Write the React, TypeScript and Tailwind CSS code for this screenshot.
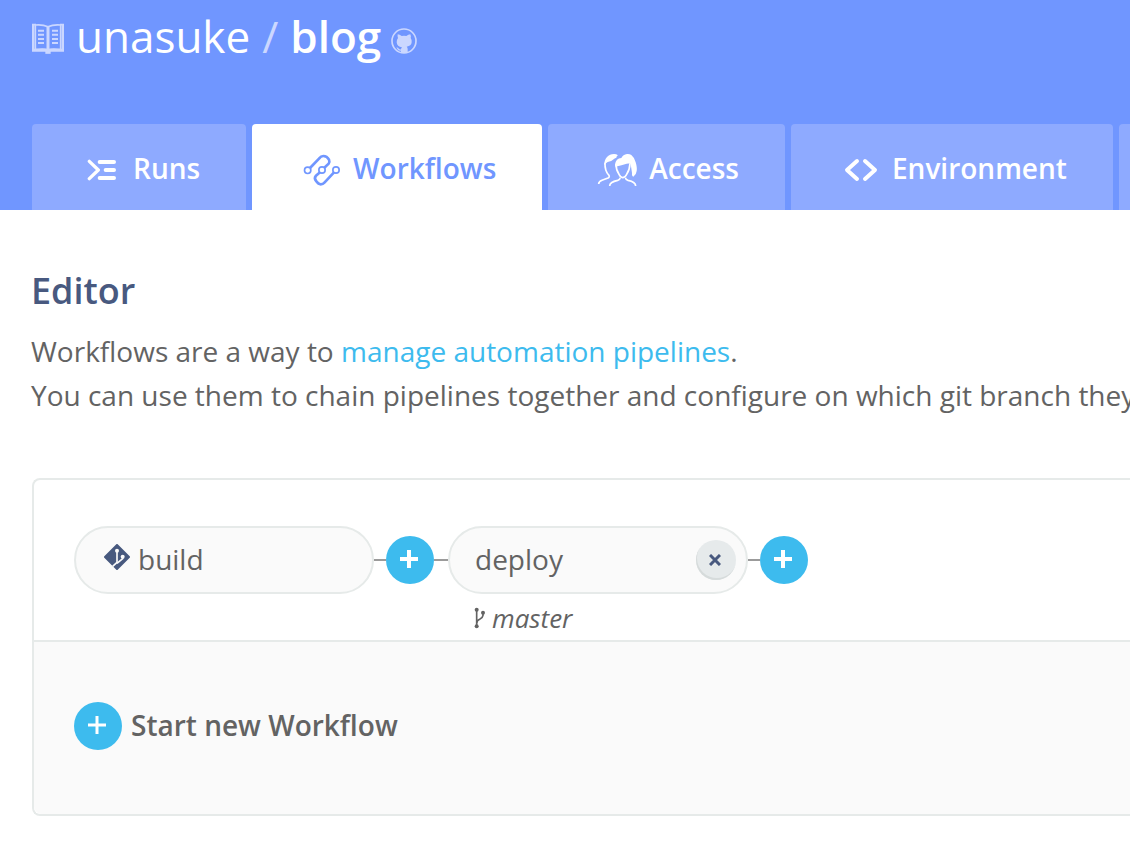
import type { ReactNode } from "react";

function BookIcon() {
  return (
    <svg viewBox="36 39 96 93" className="h-[31px] w-8 flex-none" fill="none" stroke="#cbd7ff" aria-hidden="true">
      <path d="M39.500 44v78M128.500 44v78" strokeWidth="7" />
      <path d="M36 121h39q9 0 9 5.500q0-5.500 9-5.500h39" strokeWidth="9" />
      <path d="M76 128h16" strokeWidth="7" />
      <path d="M46 118V45q22-2 38 5v69q-15-4-38 0ZM84 50q16-7 38-5v74q-23-4-38 0" strokeWidth="5" />
      <path d="M36 44h12M120 44h12" strokeWidth="5" />
      <path d="M84 48v74" strokeWidth="9" />
      <path d="M54 62h18M54 74h18M54 87h18M54 99h18M96 62h18M96 74h18M96 87h18M96 99h18" strokeWidth="6" />
    </svg>
  );
}

function OctocatIcon() {
  return (
    <svg viewBox="419 53 78 78" className="size-[26px]" aria-hidden="true">
      <circle cx="458" cy="92" r="36" fill="none" stroke="#cbd7ff" strokeWidth="5" />
      <path
        fill="#cbd7ff"
        d="M439 72q6 0 12 5q7-1 14 0q6-5 12-5q3 6 1 11q4 5 3 13q-1 11-15 13q3 3 3 7v12h-20v-7q-8 1-11-5q-1-3-3-4q5-1 8 4q3 2 6 1q1-4 3-6q-15-2-16-15q0-8 4-13q-2-5-1-11Z"
      />
    </svg>
  );
}

function RunsIcon() {
  return (
    <svg viewBox="201 129 90 72" className="h-6 w-[30px]" fill="none" stroke="currentColor" strokeLinecap="round" strokeLinejoin="round" aria-hidden="true">
      <path d="M208 139l27 26l-27 26" strokeWidth="10" />
      <path d="M239 141h43M257 165h25M239 189h43" strokeWidth="12" />
    </svg>
  );
}

function WorkflowsIcon() {
  return (
    <svg viewBox="174 112 114 102" className="h-[34px] w-[38px]" fill="none" stroke="currentColor" aria-hidden="true">
      <g strokeWidth="8">
        <path d="M195 157l27-28q6-8 13-8q11 0 17 11q3 7-1 12l-13 12" />
        <path d="M225 170l-12 10q-7 8 1 17q6 9 13 9q7 0 12-6l28-30" />
      </g>
      <g strokeWidth="5">
        <circle cx="188" cy="164" r="9.500" />
        <circle cx="231" cy="163" r="9.500" />
        <circle cx="273" cy="163" r="9.500" />
      </g>
    </svg>
  );
}

function AccessIcon() {
  return (
    <svg viewBox="201 114 126 102" className="h-[34px] w-[42px]" fill="none" stroke="currentColor" strokeWidth="5" aria-hidden="true">
      <path d="M225 143q-1 25 12 38q3 6-5 9l-16 6q-10 4-10 11" />
      <path d="M258 147q0 18 9 31q11 20 23 0q9-13 10-32" />
      <path d="M271 188q-1 6-8 8q-24 5-24 17M286 188q1 6 8 8q23 5 23 17" />
      <path
        fill="currentColor"
        stroke="none"
        d="M223 151q-1-15 8-25q8-9 21-9q7 0 12 4q-4 1-5 7q-6 2-8 5q-6 7-18 8q-5 3-10 10Z"
      />
      <path
        fill="currentColor"
        stroke="none"
        d="M256 155q-3-11 5-21q5-5 13-5q5-10 17-12q7-1 13 3q9 7 13 22q5 17 3 26q-1 11-10 17q-5-1-4-11l-4-27q-5-3-12-1q-14 5-34 9Z"
      />
    </svg>
  );
}

function EnvironmentIcon() {
  return (
    <svg viewBox="192 129 108 78" className="h-[26px] w-9" fill="none" stroke="currentColor" strokeWidth="12" strokeLinecap="round" strokeLinejoin="round" aria-hidden="true">
      <path d="M234 141l-30 27l30 27M258 141l30 27l-30 27" />
    </svg>
  );
}

function GitIcon() {
  return (
    <svg viewBox="132 87 78 78" className="mb-1 size-[26px] flex-none" aria-hidden="true">
      <path d="M171 90l36 36l-36 36l-36-36Z" fill="#48597f" stroke="#48597f" strokeWidth="6" strokeLinejoin="round" />
      <g fill="none" stroke="#fafafa" strokeWidth="5">
        <path d="M171 108v34l-13 12" />
        <path d="M188 126v5l-17 14" />
      </g>
      <circle cx="171" cy="107" r="6" fill="#fafafa" />
      <circle cx="188" cy="125" r="6" fill="#fafafa" />
    </svg>
  );
}

function BranchIcon() {
  return (
    <svg viewBox="345 276 36 66" className="h-[22px] w-3" fill="none" stroke="#636363" strokeWidth="5" aria-hidden="true">
      <path d="M353 284v50M372 292v9q-1 7-9 11q-10 4-10 14" />
      <g fill="#636363" stroke="none">
        <circle cx="353" cy="284" r="6" />
        <circle cx="353" cy="334" r="6" />
        <circle cx="372" cy="293" r="6" />
      </g>
    </svg>
  );
}

function Tab({ icon, label, active = false }: { icon: ReactNode; label: string; active?: boolean }) {
  return (
    <a
      href="#"
      aria-current={active ? "page" : undefined}
      className={
        "flex h-[86px] flex-none items-center gap-[7px] rounded-t-[4px] px-[46px] pt-[2px] text-[28px] font-semibold " +
        (active ? "bg-white text-[#7096ff]" : "bg-[#8eaaff] text-white")
      }
    >
      <span className="flex w-12 justify-center pt-1">{icon}</span>
      {label}
    </a>
  );
}

function AddButton({ label, bold = false }: { label: string; bold?: boolean }) {
  return (
    <button type="button" aria-label={label} className="flex size-12 flex-none items-center justify-center rounded-full bg-[#3dbbee] pb-[2px] pr-[2px]">
      <svg viewBox="0 0 18 18" className="size-[18px]" stroke="#fff" strokeWidth={bold ? 4 : 3} aria-hidden="true">
        <path d="M9 0v18M0 9h18" />
      </svg>
    </button>
  );
}

export default function App() {
  return (
    <div className="min-h-screen overflow-hidden bg-white font-['Open_Sans',sans-serif] text-[#636363]">
      <header className="bg-[#7096ff] pl-8">
        <div className="flex h-[124px] items-start gap-3 pt-[6px] text-white">
          <div className="flex h-[62px] items-center pt-[2px]">
            <BookIcon />
          </div>
          <h1 className="flex items-center gap-3 whitespace-nowrap text-[44px] leading-[60px]">
            <a href="#">unasuke</a>
            <span className="text-[#cbd7ff]">/</span>
            <span className="flex items-center gap-[10px]">
              <a href="#" className="font-semibold">blog</a>
              <a href="#" aria-label="GitHub repository" className="pt-[10px]">
                <OctocatIcon />
              </a>
            </span>
          </h1>
        </div>
        <nav className="flex gap-[6px]">
          <Tab icon={<RunsIcon />} label="Runs" />
          <Tab icon={<WorkflowsIcon />} label="Workflows" active />
          <Tab icon={<AccessIcon />} label="Access" />
          <Tab icon={<EnvironmentIcon />} label="Environment" />
          <a href="#" aria-label="Options" className="flex-1 rounded-tl-[4px] bg-[#8eaaff]" />
        </nav>
      </header>

      <main>
        <div className="pl-[31px]">
          <h2 className="pt-[56px] text-[36px] font-semibold leading-[50px] text-[#48597f]">Editor</h2>
          <p className="mt-[13px] whitespace-nowrap text-[28px] leading-[44px]">
            Workflows are a way to{" "}
            <a href="#" className="text-[#3dbbee]">manage automation pipelines</a>.
            <br />
            You can use them to chain pipelines together and configure on which git branch they
          </p>
        </div>

        <section className="ml-8 mt-[61px] rounded-l-lg border-2 border-r-0 border-[#e6eae9]">
          <div className="h-[160px] pl-10 pt-[46px]">
            <div className="flex items-start">
              <div className="flex h-[68px] w-[300px] items-center gap-2 rounded-full border-2 border-[#e6eae9] bg-[#fafafa] pb-[2px] pl-7 text-[28px]">
                <GitIcon />
                build
              </div>
              <div className="flex h-[68px] items-center">
                <span className="h-[2px] w-3 bg-[#9b9b9b]" />
                <AddButton label="Add pipeline after build" bold />
                <span className="h-[2px] w-[14px] bg-[#9b9b9b]" />
              </div>
              <div>
                <div className="flex h-[68px] w-[300px] items-center justify-between rounded-full border-2 border-[#e6eae9] bg-[#fafafa] pl-[25px] pr-[10px] text-[28px]">
                  <span className="pb-[2px]">deploy</span>
                  <button
                    type="button"
                    aria-label="Remove deploy"
                    className="flex size-10 items-center justify-center rounded-full bg-[#e6eaeb] pr-[2px] shadow-[inset_1px_-2px_0_#d6dbdb]"
                  >
                    <svg viewBox="0 0 12 12" className="size-3" stroke="#48597f" strokeWidth="3" aria-hidden="true">
                      <path d="M1 1l10 10M11 1L1 11" />
                    </svg>
                  </button>
                </div>
                <div className="flex items-center gap-[6px] pl-[26px] pt-[6px] text-[26px] italic leading-[36px]">
                  <BranchIcon />
                  master
                </div>
              </div>
              <div className="flex h-[68px] items-center">
                <span className="h-[2px] w-3 bg-[#9b9b9b]" />
                <AddButton label="Add pipeline after deploy" bold />
              </div>
            </div>
          </div>
          <div className="flex h-[174px] items-center gap-[9px] rounded-bl-lg border-t-2 border-[#e6eae9] bg-[#fafafa] pb-1 pl-10 text-[28px] font-semibold">
            <AddButton label="Start new workflow" />
            <span className="pb-[2px]">Start new Workflow</span>
          </div>
        </section>
      </main>
    </div>
  );
}
